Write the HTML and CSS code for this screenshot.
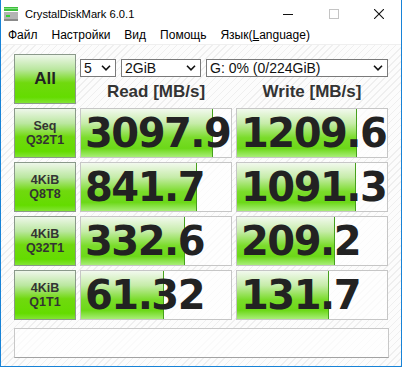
FILE: index.html
```html
<!DOCTYPE html>
<html lang="ru">
<head>
    <meta charset="UTF-8">
    <title>CrystalDiskMark 6.0.1</title>
    <link rel="stylesheet" href="styles.css">
</head>
<body>
    <div class="window">
        <div class="titlebar">
            <svg class="app-icon" width="14" height="14" viewBox="0 0 14 14">
                <rect x="0" y="0" width="14" height="4" fill="#3cbf3c"/>
                <rect x="0" y="1" width="14" height="1" fill="#7ee07e"/>
                <rect x="0" y="5" width="14" height="9" fill="#b4b4b4"/>
                <rect x="0" y="12" width="14" height="2" fill="#8a8a8a"/>
                <rect x="2" y="8" width="4" height="2" fill="#34d234"/>
            </svg>
            <span class="title">CrystalDiskMark 6.0.1</span>
            <div class="caption">
                <div class="cap">
                    <svg width="10" height="10" viewBox="0 0 10 10"><path d="M0 5.5H10" stroke="#111" stroke-width="1"/></svg>
                </div>
                <div class="cap">
                    <svg width="10" height="10" viewBox="0 0 10 10"><rect x="0.5" y="0.5" width="9" height="9" fill="none" stroke="#c4c4c4"/></svg>
                </div>
                <div class="cap cap-close">
                    <svg width="10" height="10" viewBox="0 0 10 10"><path d="M0 0L10 10M10 0L0 10" stroke="#111" stroke-width="1.1"/></svg>
                </div>
            </div>
        </div>

        <div class="menubar">
            <span>Файл</span>
            <span>Настройки</span>
            <span>Вид</span>
            <span>Помощь</span>
            <span>Язык(<u>L</u>anguage)</span>
        </div>

        <div class="content">
            <div class="board">
                <div class="label all">All</div>
                <div class="top">
                    <div class="selects">
                        <div class="sel sel-count">5 <svg width="10" height="6" viewBox="0 0 10 6"><path d="M1 0.8L5 4.8L9 0.8" fill="none" stroke="#111" stroke-width="1.6"/></svg></div>
                        <div class="sel sel-size">2GiB <svg width="10" height="6" viewBox="0 0 10 6"><path d="M1 0.8L5 4.8L9 0.8" fill="none" stroke="#111" stroke-width="1.6"/></svg></div>
                        <div class="sel sel-drive">G: 0% (0/224GiB) <svg width="10" height="6" viewBox="0 0 10 6"><path d="M1 0.8L5 4.8L9 0.8" fill="none" stroke="#111" stroke-width="1.6"/></svg></div>
                    </div>
                    <div class="heads">
                        <div class="head">Read [MB/s]</div>
                        <div class="head">Write [MB/s]</div>
                    </div>
                </div>

                <!-- Seq Q32T1 -->
                <div class="label">Seq<br>Q32T1</div>
                <div class="result"><div class="bar" style="width: 88%"></div><div class="val">3097.9</div></div>
                <div class="result"><div class="bar" style="width: 80%"></div><div class="val">1209.6</div></div>

                <!-- 4KiB Q8T8 -->
                <div class="label">4KiB<br>Q8T8</div>
                <div class="result"><div class="bar" style="width: 77%"></div><div class="val">841.7</div></div>
                <div class="result"><div class="bar" style="width: 79.5%"></div><div class="val">1091.3</div></div>

                <!-- 4KiB Q32T1 -->
                <div class="label">4KiB<br>Q32T1</div>
                <div class="result"><div class="bar" style="width: 69%"></div><div class="val">332.6</div></div>
                <div class="result"><div class="bar" style="width: 65%"></div><div class="val">209.2</div></div>

                <!-- 4KiB Q1T1 -->
                <div class="label">4KiB<br>Q1T1</div>
                <div class="result"><div class="bar" style="width: 55%"></div><div class="val">61.32</div></div>
                <div class="result"><div class="bar" style="width: 61%"></div><div class="val">131.7</div></div>
            </div>

            <div class="comment"></div>
        </div>
    </div>
</body>
</html>
```

FILE: styles.css
```css
body {
    margin: 0;
    font-family: "Liberation Sans", Arial, sans-serif;
    color: #000;
}
.window {
    width: 402px;
    height: 367px;
    box-sizing: border-box;
    border: 1px solid #1883d7;
    border-top: none;
    background: #fff;
}
.titlebar {
    height: 27px;
    display: flex;
    align-items: center;
}
.app-icon {
    margin-left: 3px;
}
.title {
    margin-left: 7px;
    font-size: 11.2px;
    color: #000;
}
.caption {
    margin-left: auto;
    display: flex;
}
.cap {
    width: 46px;
    height: 27px;
    display: flex;
    align-items: center;
    justify-content: center;
}
.cap-close {
    width: 44px;
}
.menubar {
    height: 17px;
    display: flex;
    gap: 14px;
    padding-left: 7px;
    font-size: 12px;
    line-height: 17px;
}
.content {
    border-top: 1px solid #efefef;
    padding: 9px 12px 8px 13px;
    background-color: #fcfcfc;
    background-image: repeating-linear-gradient(135deg, transparent 0 4px, #efefef 4px 5px);
}
.board {
    display: grid;
    grid-template-columns: 62px 152px 152px;
    grid-auto-rows: 50px;
    gap: 4px;
}
.label {
    box-sizing: border-box;
    border: 1px solid #8a998a;
    background: linear-gradient(#eef7ea 0%, #bae79f 30%, #70d90e 58%, #64dc00 88%, #82e434 100%);
    display: flex;
    flex-direction: column;
    align-items: center;
    justify-content: center;
    text-align: center;
    font-size: 12.5px;
    font-weight: bold;
    line-height: 14px;
    color: #333;
}
.all {
    font-size: 17px;
    color: #222;
}
.top {
    grid-column: 2 / 4;
}
.selects {
    margin-top: 5px;
    display: flex;
    gap: 5px;
}
.sel {
    height: 18px;
    box-sizing: border-box;
    border: 1px solid #7a7a7a;
    background: #fff;
    display: flex;
    align-items: center;
    justify-content: space-between;
    padding: 0 4px 0 3px;
    font-size: 14px;
    color: #111;
}
.sel-count {
    width: 36px;
}
.sel-size {
    width: 80px;
}
.sel-drive {
    flex: 1;
}
.heads {
    margin-top: 5px;
    display: grid;
    grid-template-columns: 152px 152px;
    gap: 4px;
}
.head {
    text-align: center;
    font-size: 17px;
    font-weight: bold;
    line-height: 20px;
    color: #333;
}
.result {
    position: relative;
    box-sizing: border-box;
    border: 1px solid #c6c6c6;
    background: rgba(255, 255, 255, 0.7);
    overflow: hidden;
}
.bar {
    position: absolute;
    left: 0;
    top: 0;
    bottom: 0;
    box-sizing: border-box;
    border-right: 1px solid #46a01c;
    background: linear-gradient(#f2f9ee 0%, #c6eca9 30%, #7adc2a 60%, #6cd818 82%, #a8ee78 100%);
}
.val {
    position: relative;
    padding-left: 4px;
    font-family: "DejaVu Sans", sans-serif;
    font-size: 40px;
    font-weight: bold;
    letter-spacing: -1.5px;
    line-height: 48px;
    color: #222;
    white-space: nowrap;
}
.comment {
    margin-top: 8px;
    height: 30px;
    box-sizing: border-box;
    border: 1px solid #c8c8c8;
    border-bottom-color: #a2a2a2;
    background: rgba(255, 255, 255, 0.7);
}
```
